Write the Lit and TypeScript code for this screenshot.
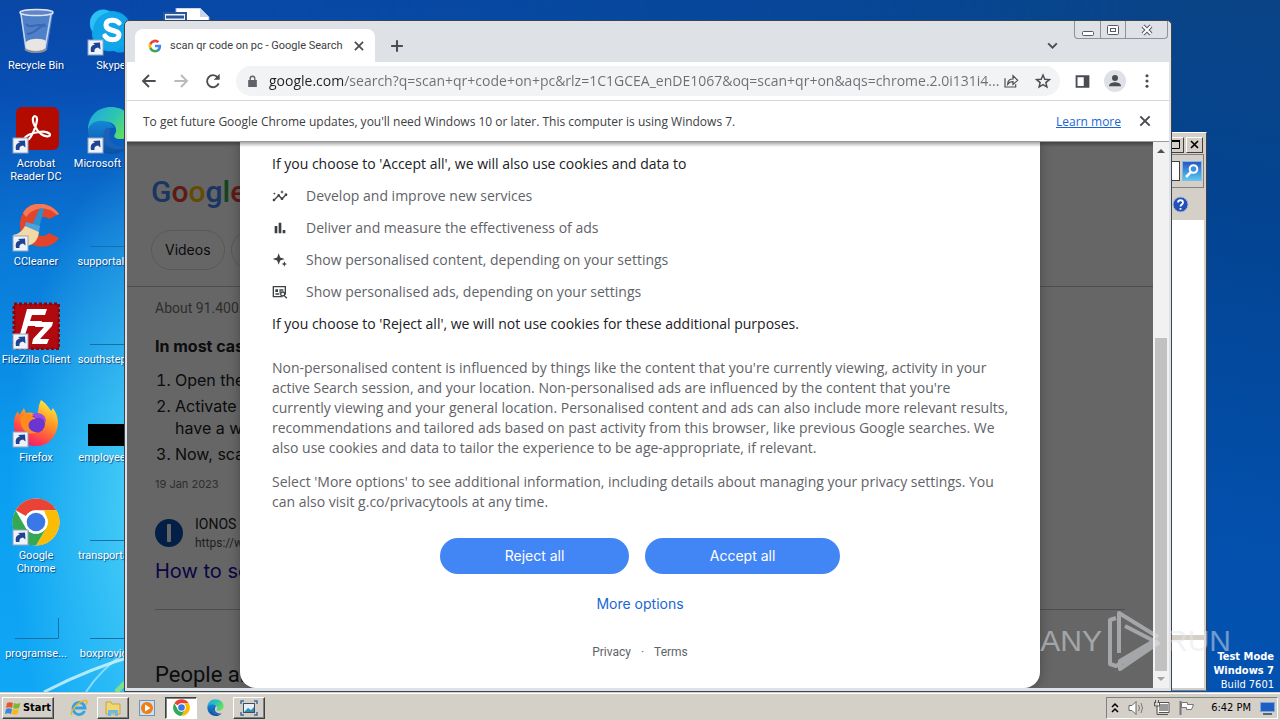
import { LitElement, html, css, svg, nothing } from "lit";
import { customElement } from "lit/decorators.js";

const shortcut = svg`
  <rect x="1" y="32" width="15" height="15" fill="#eef3fa" stroke="#8fa3c0" stroke-width="1"/>
  <path d="M4 44c-1-5 1-7 4-7.500L6 35l7-.5.500 7-2.500-2c-2.500.5-4 1.500-3.500 4.500z" fill="#1f4390"/>`;

const chromeMark = svg`
  <circle cx="24" cy="24" r="23.500" fill="#fff"/>
  <path d="M24 .5A23.500 23.500 0 0 1 44.400 12.200H24A11.800 11.800 0 0 0 13.800 18.100L3.700 12.200A23.500 23.500 0 0 1 24 .5z" fill="#ea4335"/>
  <path d="M44.400 12.200A23.500 23.500 0 0 1 24 47.500L34.200 29.900A11.800 11.800 0 0 0 34.200 18.100L32 12.200z" fill="#fbbc05"/>
  <path d="M3.600 12.200A23.500 23.500 0 0 0 24 47.500L34.200 29.900A11.800 11.800 0 0 1 13.800 29.900z" fill="#34a853"/>
  <circle cx="24" cy="24" r="11.600" fill="#fff"/><circle cx="24" cy="24" r="9.300" fill="#3b78e7"/>`;

const edgeMark = svg`
  <defs>
    <linearGradient id="eg" x1="0" y1="0" x2="1" y2=".5"><stop offset="0" stop-color="#1fa5e4"/><stop offset=".6" stop-color="#2fc6b0"/><stop offset="1" stop-color="#66e05a"/></linearGradient>
    <linearGradient id="eb" x1="0" y1="0" x2="0" y2="1"><stop offset="0" stop-color="#1487d8"/><stop offset="1" stop-color="#0c4fa3"/></linearGradient>
  </defs>
  <path d="M1 24C1 10 11 1 24 1s23 9 23 19c0 8-6 13-13 13-6 0-8-2-6-5 3-4 0-12-8-12C10 16 2 22 1 24z" fill="url(#eg)"/>
  <path d="M1 24c1-6 8-10 15-9 6 0 10 3 11 7-9-2-14 9-7 17 5 5 14 6 22 1-4 5-10 8-17 8C11 48 1 38 1 24z" fill="url(#eb)"/>
  <path d="M20 22c-5 4-5 13 1 18 6 4 15 4 21 0-7 2-16 0-19-7-1-4-1-8 1-10z" fill="#1b61b5"/>`;

const marks: Record<string, unknown> = {
  bin: svg`
    <path d="M8 4l5 38c5 4 17 4 22 0l6-38z" fill="#a9c4ea" fill-opacity=".45"/>
    <path d="M9 6l5 34c5 3 15 3 19 0l6-34" fill="none" stroke="#c3d6f0" stroke-width="1.500"/>
    <ellipse cx="24.500" cy="4.500" rx="16.500" ry="3" fill="#5e86c8" stroke="#dfe7f2" stroke-width="1.500"/>
    <path d="M14 34c4-4 16-4 20-1l-1 8c-5 3-14 3-19 0z" fill="#e8e6e2"/>
    <path d="M14 16c6 6 8-2 20 2M15 26c8 0 10-6 18-10" stroke="#2c56a6" stroke-width="2" fill="none" opacity=".6"/>
    <path d="M13 41c5 4 17 4 21 0" stroke="#8b8f96" stroke-width="2" fill="none"/>`,
  skype: svg`
    <path d="M12 2c5-2 9 0 11 1 12-1 22 8 21 20 3 4 4 9 1 14-4 8-13 9-18 6C14 45 4 36 5 24 0 15 4 5 12 2z" fill="#0a9fe8"/>
    <circle cx="16" cy="15" r="13" fill="#2cc0f4"/><circle cx="25" cy="23" r="19" fill="#10a6e9"/>
    <path d="M32 15c-3-4-13-4-13 2 0 7 13 4 13 10 0 6-11 6-14 1" fill="none" stroke="#fff" stroke-width="5" stroke-linecap="round"/>${shortcut}`,
  acrobat: svg`
    <rect x="4" y="1" width="43" height="43" rx="6" fill="#b30b00"/>
    <path d="M12 33c2-4 8-6 15-7 7-1 11 1 11 3s-5 2-9-1c-5-4-9-12-8-16 1-3 4-2 4 1 0 6-5 17-8 20-2 2-5 2-5 0z" fill="none" stroke="#fff" stroke-width="2.200"/>${shortcut}`,
  edge: svg`${edgeMark}${shortcut}`,
  ccleaner: svg`
    <path d="M47 10C38-3 18-4 11 9c-7 13-1 27 10 32 10 4 21 1 26-7l-10-5c-6 6-15 2-16-6 0-9 9-13 16-8z" fill="#e2452b"/>
    <path d="M47 10C38-3 18-4 11 9l3 4C21 3 36 1 45 11z" fill="#f47a55"/>
    <path d="M28 4l4 1-5 19-7-3z" fill="#2d8fd0"/><path d="M14 18l14 4-1 6-14-5z" fill="#4aa5dc"/>
    <path d="M13 22l14 6c-1 8-5 13-13 14C8 42 3 36 1 31c6-1 9-4 12-9z" fill="#f4d9a5"/>${shortcut}`,
  filezilla: svg`
    <rect x="2" y="2" width="45" height="45" fill="#b00a10"/>
    <rect x="2" y="2" width="45" height="45" fill="none" stroke="#8c0509" stroke-width="3" stroke-dasharray="3 2"/>
    <path d="M15 7h20l-2 6H20l-2 6h12l-2 5H16l-4 12H7z" fill="#fff"/>
    <path d="M25 20h16l-1 4-12 13h9l-2 5H20l1-5 11-12h-9z" fill="#fff"/>${shortcut}`,
  firefox: svg`
    <defs><linearGradient id="ff" x1=".8" y1="0" x2=".3" y2="1"><stop offset="0" stop-color="#fff04a"/><stop offset=".4" stop-color="#ff9a22"/><stop offset=".8" stop-color="#ff3a50"/><stop offset="1" stop-color="#e0207c"/></linearGradient></defs>
    <path d="M29 0c6 4 8 8 10 11l2-3c5 7 6 14 4 21-3 12-13 18-22 17C11 46 1 37 2 23c0-6 2-9 4-12l1 4c2-2 3-4 5-7l2 5c5-1 8 0 11 2 2-5 1-9 4-15z" fill="url(#ff)"/>
    <circle cx="24" cy="24" r="9" fill="#6a35d2"/>
    <path d="M8 17c7-4 13-1 16 2-4 0-5 1-7 4-2 5 3 10 9 9-10 5-18-2-18-15z" fill="#ff8a1e"/>
    <path d="M20 14c8-3 14 1 14 8-3-3-6-5-10-4z" fill="#9a4be0"/>${shortcut}`,
  chrome: svg`${chromeMark}${shortcut}`,
  word: svg`<path d="M14 0h24l9 9v39H14z" fill="#fff" stroke="#9db0ce"/><path d="M38 0v9h9z" fill="#c7d6ec"/><rect x="2" y="5" width="22" height="24" fill="#e9effa" stroke="#2b579a" stroke-width="2"/><path d="M4 9h18" stroke="#2b579a" stroke-width="3"/>`,
  thin: svg`<path d="M3 42.500h44" stroke="#1a6ea8" stroke-width="1"/>`,
  corner: svg`<path d="M3 42.500h43.500V22" fill="none" stroke="#1a6ea8" stroke-width="1"/>`,
  black: svg`<rect x="1" y="24" width="47" height="22" fill="#000"/>`,
};

const desktopItems: [string, string][] = [
  ["bin", "Recycle Bin"], ["acrobat", "Acrobat Reader DC"], ["ccleaner", "CCleaner"],
  ["filezilla", "FileZilla Client"], ["firefox", "Firefox"], ["chrome", "Google Chrome"], ["corner", "programse..."],
  ["skype", "Skype"], ["edge", "Microsoft\u00a0Edge"], ["thin", "supportales..."],
  ["thin", "southsteppi..."], ["black", "employeest..."], ["thin", "transportati..."], ["thin", "boxprovide..."],
  ["word", ""],
];

const gMark = svg`
  <path fill="#4285f4" d="M22.500 12.300c0-.8-.1-1.500-.2-2.300H12v4.300h5.900a5 5 0 0 1-2.200 3.300v2.800h3.600c2-2 3.200-4.800 3.200-8.100z"/>
  <path fill="#34a853" d="M12 23c3 0 5.500-1 7.300-2.700l-3.600-2.700a6.600 6.600 0 0 1-9.800-3.500H2.200v2.800A11 11 0 0 0 12 23z"/>
  <path fill="#fbbc05" d="M5.900 14.100a6.600 6.600 0 0 1 0-4.200V7.100H2.200a11 11 0 0 0 0 9.900z"/>
  <path fill="#ea4335" d="M12 5.400c1.600 0 3.100.6 4.200 1.600l3.200-3.100A11 11 0 0 0 2.200 7.100l3.700 2.800A6.500 6.500 0 0 1 12 5.400z"/>`;

const icon = (path: unknown, size = 16, box = 24) =>
  html`<svg width=${size} height=${size} viewBox="0 0 ${box} ${box}" fill="currentColor" aria-hidden="true">${path}</svg>`;

@customElement("desktop-icons")
export class DesktopIcons extends LitElement {
  static styles = css`
    :host { display: block; font: 11px/13px Roboto, sans-serif; color: #fff; }
    .grid { display: grid; grid-auto-flow: column; grid-template-rows: repeat(7, 98px); grid-auto-columns: 72px; column-gap: 3px; padding-top: 8px; }
    .item { display: flex; flex-direction: column; align-items: center; gap: 3px; text-align: center; text-shadow: 1px 1px 1px rgba(0, 30, 90, .7); }
    .item svg { display: block; flex: none; }
  `;
  render() {
    return html`<div class="grid">${desktopItems.map(([k, label]) => html`
      <div class="item"><svg width="48" height="48" viewBox="0 0 48 48" aria-hidden="true">${marks[k]}</svg>
      ${label ? html`<span>${label}</span>` : nothing}</div>`)}</div>`;
  }
}

@customElement("search-page")
export class SearchPage extends LitElement {
  static styles = css`
    :host { display: block; position: relative; overflow: hidden; background: #fff; font-family: Inter, sans-serif; color: #202124; }
    .page { white-space: nowrap; }
    .logo { padding: 32px 24px 0; font: 500 30px/36px Roboto, sans-serif; height: 36px; }
    .b { color: #4285f4; } .r { color: #ea4335; } .y { color: #fbbc05; } .g { color: #34a853; }
    .chips { display: flex; gap: 6px; padding: 20px 24px 16px; border-bottom: 1px solid #bdc1c6; }
    .chip { height: 40px; padding: 0 13px; border: 1px solid #dadce0; border-radius: 20px; background: none; font: 14px/20px Inter, sans-serif; color: #202124; }
    .results { padding: 11px 28px 0; }
    .stats { font: 14px/20px Roboto, sans-serif; color: #70757a; }
    .answer { margin: 16px 0 11px; font-size: 16px; line-height: 24px; font-weight: 700; }
    .steps { margin: 0; padding-left: 20px; display: grid; gap: 4px; font-size: 16px; line-height: 22px; }
    .date { margin-top: 11px; font-size: 11px; line-height: 16px; color: #70757a; }
    .site { display: flex; align-items: center; gap: 12px; margin-top: 22px; }
    .site svg { flex: none; }
    .name { font: 14px/20px Roboto, sans-serif; }
    .url { font: 12px/18px Roboto, sans-serif; color: #4d5156; }
    .title { display: block; margin: 6px 0 25px; font-size: 20px; line-height: 26px; color: #1a0dab; text-decoration: none; }
    .rule { margin: 0; border: 0; border-top: 1px solid #bdc1c6; }
    .people { margin: 51px 0 0; font: 22px/28px Roboto, sans-serif; }
    .backdrop { position: absolute; inset: 0; display: flex; justify-content: center; background: rgba(0, 0, 0, .6); }
    .shade { position: absolute; inset: 0 0 auto; height: 5px; background: linear-gradient(rgba(0, 0, 0, .35), transparent); }
    .dialog { box-sizing: border-box; width: 800px; max-width: 100%; padding: 12px 32px 25px; background: #fff; border-radius: 0 0 16px 16px; box-shadow: 0 0 12px rgba(0, 0, 0, .3); font: 14px/20px "Open Sans", sans-serif; color: #5f6368; }
    .lead { margin: 0; color: #202124; }
    .uses { list-style: none; display: grid; gap: 12px; margin: 12px 0; padding: 0; }
    .uses li { display: flex; align-items: center; gap: 18px; }
    .uses svg { color: #3c4043; }
    .para { margin: 24px 0 0; white-space: nowrap; }
    .para + .para { margin-top: 14px; }
    .actions { display: flex; gap: 16px; width: 400px; margin: 26px auto 0; }
    .act { flex: 1 1 auto; height: 36px; border: 0; border-radius: 18px; background: #4285f4; color: #fff; font: 14px/20px Inter, sans-serif; }
    .more { display: block; width: fit-content; margin: 20px auto 28px; font-family: Inter, sans-serif; color: #1967d2; text-decoration: none; }
    .legal { display: flex; justify-content: center; gap: 10px; font-family: Roboto, sans-serif; font-size: 12px; }
    .legal a { color: #5f6368; text-decoration: none; }
  `;
  render() {
    return html`
      <div class="page">
        <div class="logo"><span class="b">G</span><span class="r">o</span><span class="y">o</span><span class="b">g</span><span class="g">l</span><span class="r">e</span></div>
        <div class="chips"><button class="chip">Videos</button><button class="chip">Images</button></div>
        <div class="results">
          <div class="stats">About 91.400.000</div>
          <div class="answer">In most cases</div>
          <ol class="steps"><li>Open the</li><li>Activate<br>have a w</li><li>Now, scan</li></ol>
          <div class="date">19 Jan 2023</div>
          <div class="site">
            <svg width="28" height="28" viewBox="0 0 28 28" aria-hidden="true"><circle cx="14" cy="14" r="14" fill="#0b4fb0"/><rect x="12" y="5" width="4" height="18" rx="1" fill="#fff"/></svg>
            <div><div class="name">IONOS</div><div class="url">https://w</div></div>
          </div>
          <a class="title" href="#">How to sc</a>
          <hr class="rule">
          <h2 class="people">People also</h2>
        </div>
      </div>
      <div class="backdrop">
        <div class="dialog" role="dialog" aria-label="Cookies">
          <p class="lead">If you choose to 'Accept all', we will also use cookies and data to</p>
          <ul class="uses">
            <li>${icon(svg`<path d="M21 8c-1.500 0-2.300 1.400-1.900 2.500l-3.600 3.600c-.3-.1-.7-.1-1 0l-2.600-2.600C12.300 10.400 11.500 9 10 9s-2.300 1.400-1.900 2.500l-4.600 4.600C2.400 15.700 1 16.500 1 18s1.800 2.600 3.200 1.500c.6-.5.8-1.300.7-2l4.500-4.500c.3.100.8.100 1 0l2.600 2.600c-.4 1.100.4 2.400 2 2.400s2.300-1.300 2-2.400l3.500-3.600C21.700 12.300 23 11.500 23 10c0-1.100-.9-2-2-2z"/><path d="M15 9l.9-2.100L18 6l-2.100-.9L15 3l-.9 2.100L12 6l2.100.9zM3.500 11L4 9l2-.5L4 8l-.5-2L3 8l-2 .5L3 9z"/>`)}<span>Develop and improve new services</span></li>
            <li>${icon(svg`<path d="M4 9h4v11H4zM16 15h4v5h-4zM10 4h4v16h-4z"/>`)}<span>Deliver and measure the effectiveness of ads</span></li>
            <li>${icon(svg`<path d="M10 2l2.300 6.200L19 10.500l-6.700 2.300L10 19l-2.300-6.200L1 10.500l6.700-2.300zM18.500 14l1.200 2.800 2.800 1.200-2.800 1.200-1.200 2.800-1.200-2.800-2.800-1.200 2.800-1.200z"/>`)}<span>Show personalised content, depending on your settings</span></li>
            <li>${icon(svg`<path fill-rule="evenodd" d="M1 3h20v13.500l-2-2V5H3v13h11l2 2H1z"/><path d="M5 8h4v4H5zM11 8h6v2h-6zM11 11h3v2h-3zM5 14h6v2H5z"/><path fill-rule="evenodd" d="M16 11a4 4 0 0 1 3.400 6.100L23 20.700 21.600 22 18 18.500A4 4 0 1 1 16 11zm0 2a2 2 0 1 0 0 4 2 2 0 0 0 0-4z"/>`)}<span>Show personalised ads, depending on your settings</span></li>
          </ul>
          <p class="lead">If you choose to 'Reject all', we will not use cookies for these additional purposes.</p>
          <p class="para">Non-personalised content is influenced by things like the content that you're currently viewing, activity in your<br>active Search session, and your location. Non-personalised ads are influenced by the content that you're<br>currently viewing and your general location. Personalised content and ads can also include more relevant results,<br>recommendations and tailored ads based on past activity from this browser, like previous Google searches. We<br>also use cookies and data to tailor the experience to be age-appropriate, if relevant.</p>
          <p class="para">Select 'More options' to see additional information, including details about managing your privacy settings. You<br>can also visit g.co/privacytools at any time.</p>
          <div class="actions"><button class="act">Reject all</button><button class="act">Accept all</button></div>
          <a class="more" href="#">More options</a>
          <div class="legal"><a href="#">Privacy</a><span>·</span><a href="#">Terms</a></div>
        </div>
      </div>
      <div class="shade"></div>`;
  }
}

@customElement("browser-window")
export class BrowserWindow extends LitElement {
  static styles = css`
    :host { display: flex; flex-direction: column; box-sizing: border-box; padding: 0 2px 3px; background: #dee1e6; border: 1px solid #3a4554; border-radius: 5px 5px 0 0; font-family: "Open Sans", sans-serif; }
    .strip { display: flex; align-items: flex-end; height: 41px; }
    .tab { display: flex; align-items: center; box-sizing: border-box; width: 240px; height: 33px; margin-left: 8px; padding: 0 9px 0 13px; border-radius: 8px 8px 0 0; background: #fff; font-family: Roboto, sans-serif; font-size: 11px; color: #3c4043; white-space: nowrap; }
    .tab span { flex: 1; margin-left: 8px; }
    button { display: grid; place-items: center; padding: 0; border: 0; background: none; color: #4a4d51; }
    .plus { width: 28px; height: 33px; margin-left: 8px; }
    .down { width: 28px; height: 33px; margin: 0 103px 0 auto; }
    .caps { display: flex; height: 18px; border: 1px solid #8d929b; border-top: 0; border-radius: 0 0 4px 4px; box-sizing: border-box; position: absolute; right: 3px; top: 0; }
    .caps button + button { border-left: 1px solid #8d929b; }
    .caps button { width: 25px; }
    .caps .last { width: 42px; }
    .bar { display: flex; align-items: center; height: 38px; padding: 0 10px; background: #fff; border-bottom: 1px solid #d5d7da; }
    .nav { width: 24px; height: 24px; margin-right: 8px; }
    .dim { color: #b8babd; }
    .omni { flex: 1; display: flex; align-items: center; height: 30px; margin: 0 15px 0 3px; padding: 0 9px 0 10px; border-radius: 15px; background: #f1f3f4; color: #5f6368; }
    .address { flex: 1; min-width: 0; margin: 0 0 0 10px; padding: 0; border: 0; outline: 0; font: 14px/20px "Open Sans", sans-serif; background: linear-gradient(to right, #202124 74px, #6b6f74 74px); -webkit-background-clip: text; background-clip: text; color: transparent; }
    .omni button + button { margin-left: 16px; }
    .avatar { width: 22px; height: 22px; border-radius: 50%; background: #dee1e6; margin: 0 9px 0 14px; }
    .menu { width: 24px; height: 24px; }
    .info { display: flex; align-items: center; height: 40px; padding: 0 16px; background: #fff; font-size: 12px; color: #3c4043; }
    .info a { margin: 0 16px 0 auto; color: #1967d2; }
    .view { flex: 1; display: flex; min-height: 0; border-top: 1px solid #9a9a9a; }
    .view search-page { flex: 1; min-width: 0; }
    .scroll { display: flex; flex-direction: column; width: 16px; background: #f1f1f1; color: #505050; }
    .scroll svg { flex: none; }
    .track { flex: 1; display: flex; flex-direction: column; justify-content: flex-end; padding: 0 2px 0 2px; }
    .thumb { height: 65%; background: #c1c1c1; }
    .off { color: #a3a3a3; }
  `;
  render() {
    const x = svg`<path d="M5 5l14 14M19 5L5 19" stroke="currentColor" stroke-width="3" fill="none"/>`;
    return html`
      <div class="strip">
        <div class="tab">${icon(gMark, 14)}<span>scan qr code on pc - Google Search</span><button aria-label="Close tab">${icon(x, 14)}</button></div>
        <button class="plus" aria-label="New tab">${icon(svg`<path d="M12 2v20M2 12h20" stroke="currentColor" stroke-width="3.500"/>`, 14)}</button>
        <button class="down" aria-label="Search tabs">${icon(svg`<path d="M4 8l8 8 8-8" stroke="currentColor" stroke-width="3.500" fill="none"/>`, 13)}</button>
      </div>
      <div class="caps">
        <button aria-label="Minimize"><svg width="14" height="14" viewBox="0 0 14 14"><rect x="1.500" y="8.500" width="11" height="4" rx="1" fill="#fff" stroke="#555a63"/></svg></button>
        <button aria-label="Restore"><svg width="14" height="14" viewBox="0 0 14 14"><rect x="1.500" y="2.500" width="11" height="9" rx="1" fill="#fff" stroke="#555a63"/><rect x="4.500" y="5.500" width="5" height="3" fill="#fff" stroke="#555a63"/></svg></button>
        <button class="last" aria-label="Close"><svg width="14" height="14" viewBox="0 0 14 14"><path d="M3 3l8 8M11 3l-8 8" stroke="#555a63" stroke-width="4"/><path d="M3 3l8 8M11 3l-8 8" stroke="#fff" stroke-width="2"/></svg></button>
      </div>
      <div class="bar">
        <button class="nav" aria-label="Back">${icon(svg`<path d="M22 12H4M12 3l-9 9 9 9" stroke="currentColor" stroke-width="2.800" fill="none"/>`)}</button>
        <button class="nav dim" aria-label="Forward">${icon(svg`<path d="M2 12h18M12 3l9 9-9 9" stroke="currentColor" stroke-width="2.800" fill="none"/>`)}</button>
        <button class="nav" aria-label="Reload">${icon(svg`<path d="M20.500 15.500A9 9 0 1 1 19 6.500" stroke="currentColor" stroke-width="2.800" fill="none"/><path d="M22 1v9h-9z"/>`)}</button>
        <div class="omni">
          ${icon(svg`<path fill-rule="evenodd" d="M4 9h2.500V6.500a5.500 5.500 0 0 1 11 0V9H20v13H4zm5 0h6V6.500a3 3 0 0 0-6 0z"/>`, 13)}
          <input class="address" aria-label="Address" value="google.com/search?q=scan+qr+code+on+pc&amp;rlz=1C1GCEA_enDE1067&amp;oq=scan+qr+on&amp;aqs=chrome.2.0i131i4...">
          <button aria-label="Share">${icon(svg`<path d="M3 8v13h16v-4M7 17c0-6 4-8 8-8V4l7 7-7 6v-4c-4 0-6 1-8 4z" stroke="currentColor" stroke-width="1.800" fill="none"/>`)}</button>
          <button aria-label="Bookmark">${icon(svg`<path d="M12 3l2.700 6.300 6.800.6-5.200 4.500 1.600 6.700L12 17.500l-5.900 3.600 1.600-6.700-5.200-4.500 6.800-.6z" stroke="currentColor" stroke-width="2.200" fill="none"/>`)}</button>
        </div>
        <button aria-label="Side panel">${icon(svg`<path fill-rule="evenodd" d="M1 2h22v20H1zm3 3v14h10V5z"/>`, 15)}</button>
        <button class="avatar" aria-label="Profile">${icon(svg`<circle cx="12" cy="7.500" r="4.500"/><path d="M3 20c0-5 6-6 9-6s9 1 9 6z"/>`, 16)}</button>
        <button class="menu" aria-label="Menu">${icon(svg`<circle cx="12" cy="4" r="2.300"/><circle cx="12" cy="12" r="2.300"/><circle cx="12" cy="20" r="2.300"/>`)}</button>
      </div>
      <div class="info"><span>To get future Google Chrome updates, you'll need Windows 10 or later. This computer is using Windows 7.</span><a href="#">Learn more</a><button aria-label="Dismiss">${icon(x, 16)}</button></div>
      <div class="view">
        <search-page></search-page>
        <div class="scroll">
          <svg width="16" height="17" viewBox="0 0 16 17"><path d="M4 11h8L8 7z" fill="currentColor"/></svg>
          <div class="track"><div class="thumb"></div></div>
          <svg class="off" width="16" height="17" viewBox="0 0 16 17"><path d="M4 6h8l-4 4z" fill="currentColor"/></svg>
        </div>
      </div>`;
  }
}

@customElement("task-bar")
export class TaskBar extends LitElement {
  static styles = css`
    :host { display: flex; align-items: center; box-sizing: border-box; height: 28px; padding: 2px 2px 0; background: #d4d0c8; border-top: 1px solid #d4d0c8; box-shadow: inset 0 1px #fff; font: 11px/13px "DejaVu Sans Condensed", "DejaVu Sans", sans-serif; font-stretch: condensed; color: #000; }
    button { display: flex; align-items: center; justify-content: center; box-sizing: border-box; height: 22px; width: 32px; padding: 0; border: 1px solid; background: #d4d0c8; border-color: #fff #404040 #404040 #fff; box-shadow: inset -1px -1px #808080; font: inherit; color: inherit; }
    .start { width: 52px; gap: 1px; margin-right: 7px; font-weight: 700; }
    .flat { width: 36px; border-color: transparent; background: none; box-shadow: none; }
    .on { background: #fff; border-color: #404040 #fff #fff #404040; box-shadow: inset 1px 1px #808080; }
    .tray { display: flex; align-items: center; gap: 8px; height: 20px; margin-left: auto; padding: 0 1px 0 3px; border: 1px solid; border-color: #808080 #fff #fff #808080; }
    .clock { margin: 0 0 0 8px; white-space: nowrap; }
  `;
  render() {
    return html`
      <button class="start"><svg width="17" height="16" viewBox="0 0 17 16" aria-hidden="true"><path d="M2 3c2-1 4-1 6 0L7 8C5 7 3 7 1 8z" fill="#e8552d"/><path d="M9 3c2 1 4 1 6.500 0L14 8c-2 1-4 1-6 0z" fill="#7db92e"/><path d="M1 9c2-1 4-1 6 0l-1 5c-2-1-4-1-6 0z" fill="#3b86d6"/><path d="M8 9c2 1 4 1 6 0l-1.500 5c-2 1-4 1-6 0z" fill="#f8b918"/></svg>Start</button>
      <button class="flat" aria-label="Internet Explorer"><svg width="18" height="18" viewBox="0 0 18 18"><path d="M14.500 12A6 6 0 1 1 15 9H5" fill="none" stroke="#35a3e2" stroke-width="2.800"/><path d="M2 16C-1 13 9 2 15 1.500c3 0 2 3 1 4" fill="none" stroke="#eab62c" stroke-width="1.500"/></svg></button>
      <button aria-label="Explorer"><svg width="18" height="18" viewBox="0 0 18 18"><path d="M2 3h5l1 2h8v10H2z" fill="#f0d774" stroke="#c9a53a"/><path d="M4 17v-6h10v6h-3v-3H7v3z" fill="#6fb9e6"/></svg></button>
      <button class="flat" aria-label="Media Player"><svg width="18" height="18" viewBox="0 0 18 18"><rect x="1.500" y="1.500" width="15" height="15" fill="#cfe0f0" stroke="#6f95bd"/><circle cx="9" cy="9" r="6" fill="#f07c14"/><path d="M7 5.500v7l5.500-3.500z" fill="#fff"/></svg></button>
      <button class="on" aria-label="Chrome"><svg width="17" height="17" viewBox="0 0 48 48">${chromeMark}</svg></button>
      <button class="flat" aria-label="Edge"><svg width="17" height="17" viewBox="0 0 48 48">${edgeMark}</svg></button>
      <button aria-label="Picture viewer"><svg width="18" height="18" viewBox="0 0 18 18"><path d="M1 5V2h3M14 2h3v3M17 13v3h-3M4 16H1v-3" fill="none" stroke="#3a6ea5" stroke-width="1.500"/><rect x="3.500" y="4.500" width="11" height="9" fill="#e6f1fa" stroke="#3d4f63"/><path d="M4 13l4-4 3 2 3-3v5z" fill="#2f8fb8"/></svg></button>
      <div class="tray">
        <svg width="10" height="12" viewBox="0 0 10 12"><path d="M2 5l3-3 3 3M2 10l3-3 3 3" fill="none" stroke="#000" stroke-width="1.500"/></svg>
        <svg width="17" height="16" viewBox="0 0 17 16"><path d="M1 5.500h3l4-4v13l-4-4H1z" fill="#fff" stroke="#666"/><path d="M10.500 5q2 3 0 6M13 3q3 5 0 10" fill="none" stroke="#777"/></svg>
        <svg width="17" height="16" viewBox="0 0 17 16"><rect x="5.500" y="3.500" width="10" height="8" fill="#999" stroke="#fff"/><path d="M4.500 2.500h11.500v10H6M7 14.500h8" fill="none" stroke="#555"/><path d="M1.500 2v4h5V2M4 6v8.500h3M2.500 0v3M5.500 0v3" fill="none" stroke="#555"/></svg>
        <svg width="17" height="16" viewBox="0 0 17 16"><path d="M2.500 1v14" stroke="#777" stroke-width="2"/><path d="M3.500 2.500h6v2h6l-2 5h-5v-2h-5z" fill="#fff" stroke="#777"/></svg>
        <span class="clock">6:42 PM</span>
        <svg width="17" height="16" viewBox="0 0 17 16"><rect x="1.500" y="2.500" width="14" height="9" fill="#1f5fc4" stroke="#7fa6da"/><path d="M4 14h9" stroke="#567" stroke-width="2"/></svg>
      </div>`;
  }
}

@customElement("app-root")
export class AppRoot extends LitElement {
  static styles = css`
    :host { display: flex; flex-direction: column; height: 100vh; overflow: hidden; }
    .desktop { flex: 1; position: relative; isolation: isolate; overflow: hidden; min-height: 0; background: linear-gradient(175deg, #0947a6 0, #084fb4 12%, #0a7ad8 32%, #0b9ef0 58%, #12acf8 100%); }
    .east { position: absolute; z-index: -1; inset: 0; background: linear-gradient(190deg, #0a4486 0, #034390 22%, #0350ad 60%, #0455b6 100%); -webkit-mask: linear-gradient(to right, transparent 10%, #000 90%); mask: linear-gradient(to right, transparent 10%, #000 90%); }
    .glow { position: absolute; z-index: -1; inset: 0 auto 0 0; width: 200px; background: radial-gradient(160px 360px at 170px 500px, rgba(110, 235, 250, .75), transparent); }
    .streaks { position: absolute; z-index: -1; left: 0; bottom: 0; }
    .back { position: absolute; top: 132px; right: 73px; bottom: 1px; left: 40%; display: flex; flex-direction: column; box-sizing: border-box; padding: 2px; background: #d4d0c8; border: 1px solid; border-color: #fff #404040 #808080 #fff; color: #000; }
    .caption { display: flex; justify-content: flex-end; align-items: center; gap: 2px; height: 19px; padding: 0 1px; }
    .cap { display: grid; place-items: center; box-sizing: border-box; width: 17px; height: 16px; padding: 0; background: #d4d0c8; border: 1px solid; border-color: #fff #404040 #404040 #fff; }
    .find { display: flex; align-items: center; justify-content: flex-end; gap: 2px; height: 34px; border: 1px solid #808080; border-left: 0; box-sizing: border-box; padding-right: 1px; }
    .query { width: 120px; height: 20px; box-sizing: border-box; border: 1px solid #404040; }
    .go { width: 20px; height: 20px; padding: 0; display: grid; place-items: center; border: 1px solid #8ab8e0; background: linear-gradient(#2458c8, #58c8f0); }
    .tools { display: flex; justify-content: flex-end; align-items: center; height: 32px; padding-right: 15px; }
    .pane { flex: 1; background: #fff; }
    .split { height: 5px; background: #d4d0c8; }
    .details { height: 48px; background: #fff; }
    .front { position: absolute; left: 124px; right: 108px; top: 20px; bottom: 0; }
    .build { position: absolute; right: 6px; bottom: 0; text-align: right; color: #fff; font: 11px/14px "DejaVu Sans Condensed", "DejaVu Sans", sans-serif; font-stretch: condensed; }
    .mark { position: absolute; right: 49px; bottom: 20px; display: flex; align-items: center; gap: 5px; color: rgba(225, 230, 235, .5); font: 30px/28px "Liberation Sans", sans-serif; pointer-events: none; }
  `;
  render() {
    return html`
      <main class="desktop">
        <div class="east"></div><div class="glow"></div>
        <svg class="streaks" width="200" height="80" viewBox="0 0 200 80" aria-hidden="true"><path d="M44 80Q90 56 140 42" stroke="#d6f6ff" stroke-width="3" fill="none" opacity=".8"/><path d="M86 80Q100 58 126 40" stroke="#c8f2ff" stroke-width="2" fill="none" opacity=".6"/><path d="M116 80l12-12" stroke="#7fe08a" stroke-width="5"/></svg>
        <desktop-icons></desktop-icons>
        <section class="back">
          <div class="caption">
            <button class="cap" aria-label="Maximize"><svg width="9" height="9" viewBox="0 0 9 9"><path d="M.5 1h8v7.500h-8z" fill="none" stroke="#000"/><path d="M0 1h9" stroke="#000" stroke-width="2"/></svg></button>
            <button class="cap" aria-label="Close"><svg width="9" height="9" viewBox="0 0 9 9"><path d="M1 1l7 7M8 1L1 8" stroke="#000" stroke-width="1.700"/></svg></button>
          </div>
          <div class="find"><input class="query" aria-label="Search"><button class="go" aria-label="Go"><svg width="16" height="16" viewBox="0 0 16 16"><circle cx="9.500" cy="6" r="3.800" fill="#3f8fe0" stroke="#fff" stroke-width="2"/><path d="M7 9l-5 5" stroke="#fff" stroke-width="2.500"/></svg></button></div>
          <div class="tools"><svg width="17" height="17" viewBox="0 0 17 17"><circle cx="8.500" cy="8.500" r="7.500" fill="#2451b8" stroke="#a9b8d8"/><path d="M6 6.500c0-3 5-3 5 0 0 2-2.500 2-2.500 4M8.500 12v1.700" fill="none" stroke="#fff" stroke-width="1.800"/></svg></div>
          <div class="pane"></div><div class="split"></div><div class="details"></div>
        </section>
        <div class="build"><b>Test Mode</b><br><b>Windows 7</b><br>Build 7601</div>
        <browser-window class="front"></browser-window>
        <div class="mark"><span>ANY</span><svg width="54" height="62" viewBox="0 0 54 62" aria-hidden="true"><path d="M9 8L3 10v44l6 2 42-25M12 43V3l39 24M18 16l33 17-38 26V51l32-19" fill="none" stroke="currentColor" stroke-width="4" stroke-linejoin="round"/></svg><span>RUN</span></div>
      </main>
      <task-bar></task-bar>`;
  }
}
